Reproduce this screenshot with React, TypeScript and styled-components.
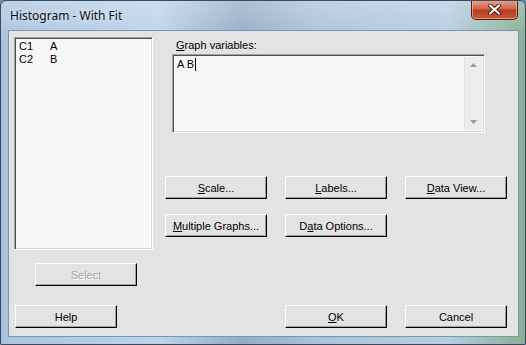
import styled, { createGlobalStyle } from "styled-components";

const Global = createGlobalStyle`
  html, body { margin: 0; padding: 0; background: #6f8fae; }
  body { width: 526px; height: 345px; overflow: hidden; }
`;

const Window = styled.div`
  width: 526px;
  height: 345px;
  display: flex;
  flex-direction: column;
  box-sizing: border-box;
  border-radius: 6px 6px 2px 2px;
  border: 1px solid #3b4a5c;
  background:
    linear-gradient(180deg, rgba(255, 255, 255, 0.25) 0%, rgba(255, 255, 255, 0) 40px),
    linear-gradient(90deg, #a9c4df 0%, #bcd3ea 30%, #93adc6 46%, #abc3da 60%, #b6cde3 85%, #86b092 100%);
  overflow: hidden;
  font-family: "Liberation Sans", Arial, sans-serif;
`;

const TitleBar = styled.div`
  height: 29px;
  display: flex;
  align-items: flex-start;
  justify-content: space-between;
  padding-left: 9px;
  padding-right: 7px;
`;

const Title = styled.div`
  font-family: "Noto Sans", "Open Sans", sans-serif;
  font-size: 12px;
  color: #0b0f14;
  margin-top: 6px;
  text-shadow: 0 0 6px rgba(255, 255, 255, 0.9);
`;

const CloseButton = styled.div`
  width: 45px;
  height: 19px;
  margin-top: -1px;
  border: 1px solid #5a1a10;
  border-top: none;
  border-radius: 0 0 5px 5px;
  background: linear-gradient(180deg, #e8a592 0%, #d0654c 45%, #b83a20 55%, #c8583a 100%);
  box-shadow: inset 0 0 0 1px rgba(255, 220, 200, 0.5);
  display: flex;
  align-items: center;
  justify-content: center;
`;

const Frame = styled.div`
  flex: 1;
  display: flex;
  padding: 0 6px 7px 7px;
`;

const Client = styled.div`
  flex: 1;
  display: flex;
  flex-direction: column;
  background: #e3e3e3;
  border: 1px solid #8195aa;
  padding: 6px 0 0 5px;
  box-sizing: border-box;
`;

const Top = styled.div`
  display: flex;
  gap: 12px;
`;

const LeftColumn = styled.div`
  width: 139px;
  display: flex;
  flex-direction: column;
`;

const Sunken = styled.div`
  box-sizing: border-box;
  border: 1px solid;
  border-color: #a0a0a0 #ffffff #ffffff #a0a0a0;
  box-shadow: inset 1px 1px 0 #505050, inset -1px -1px 0 #d8d8d8;
  background: #f7f7f7;
`;

const ListBox = styled(Sunken)`
  height: 213px;
  padding: 2px 4px;
  font-size: 11px;
  color: #000;
`;

const ListRow = styled.div`
  display: flex;
  height: 13px;
  line-height: 13px;
`;

const Col = styled.span`
  width: 31px;
`;

const Button = styled.div<{ $disabled?: boolean }>`
  width: 102px;
  height: 23px;
  box-sizing: border-box;
  display: flex;
  align-items: center;
  justify-content: center;
  border: 1px solid;
  border-color: #ffffff #000000 #000000 #ffffff;
  box-shadow: inset -1px -1px 0 #a0a0a0;
  background: #e3e3e3;
  font-size: 11px;
  color: ${(p) => (p.$disabled ? "#a3a3a3" : "#000")};
  text-shadow: ${(p) => (p.$disabled ? "1px 1px 0 #fff" : "none")};
`;

const SelectButton = styled(Button)`
  margin-top: 13px;
  margin-left: 21px;
`;

const RightColumn = styled.div`
  display: flex;
  flex-direction: column;
`;

const Label = styled.div`
  font-size: 11px;
  color: #000;
  margin: 2px 0 0 11px;
  height: 14px;
`;

const TextArea = styled(Sunken)`
  margin: 1px 0 0 7px;
  width: 313px;
  height: 79px;
  display: flex;
  background: #f7f7f7;
`;

const TextContent = styled.div`
  flex: 1;
  padding: 3px 4px;
  font-size: 11px;
  display: flex;
  align-items: flex-start;
`;

const Caret = styled.span`
  display: inline-block;
  width: 0;
  height: 13px;
  border-left: 1px solid #000;
  margin-left: 1px;
`;

const ScrollBar = styled.div`
  width: 17px;
  margin: 2px 2px 2px 0;
  background: #ececec;
  border-left: 1px solid #e0e0e0;
  display: flex;
  flex-direction: column;
  justify-content: space-between;
  align-items: center;
  padding: 6px 0;
`;

const ButtonGrid = styled.div`
  display: grid;
  grid-template-columns: repeat(3, 102px);
  column-gap: 18px;
  row-gap: 15px;
  margin-top: 43px;
`;

const Bottom = styled.div`
  display: flex;
  align-items: center;
  margin-top: 19px;
  padding-left: 1px;
  gap: 18px;
`;

const Spacer = styled.div`
  width: 132px;
`;

const U = styled.span`
  text-decoration: underline;
`;

const Arrow = ({ up }: { up?: boolean }) => (
  <svg width="7" height="4" viewBox="0 0 7 4">
    <path d={up ? "M0 4 L3.5 0 L7 4 Z" : "M0 0 L3.5 4 L7 0 Z"} fill="#9a9a9a" />
  </svg>
);

const CloseIcon = () => (
  <svg width="13" height="11" viewBox="0 0 13 11">
    <path d="M2 1.5 L11 9.5 M11 1.5 L2 9.5" stroke="#4a1208" strokeWidth="4" strokeLinecap="round" />
    <path d="M2 1.5 L11 9.5 M11 1.5 L2 9.5" stroke="#ffffff" strokeWidth="2.2" strokeLinecap="round" />
  </svg>
);

export default function App() {
  return (
    <>
      <Global />
      <Window>
        <TitleBar>
          <Title>Histogram - With Fit</Title>
          <CloseButton>
            <CloseIcon />
          </CloseButton>
        </TitleBar>
        <Frame>
          <Client>
            <Top>
              <LeftColumn>
                <ListBox>
                  <ListRow>
                    <Col>C1</Col>
                    <span>A</span>
                  </ListRow>
                  <ListRow>
                    <Col>C2</Col>
                    <span>B</span>
                  </ListRow>
                </ListBox>
                <SelectButton $disabled>Select</SelectButton>
              </LeftColumn>
              <RightColumn>
                <Label>
                  <U>G</U>raph variables:
                </Label>
                <TextArea>
                  <TextContent>
                    A B<Caret />
                  </TextContent>
                  <ScrollBar>
                    <Arrow up />
                    <Arrow />
                  </ScrollBar>
                </TextArea>
                <ButtonGrid>
                  <Button>
                    <U>S</U>cale...
                  </Button>
                  <Button>
                    <U>L</U>abels...
                  </Button>
                  <Button>
                    <U>D</U>ata View...
                  </Button>
                  <Button>
                    <U>M</U>ultiple Graphs...
                  </Button>
                  <Button>
                    D<U>a</U>ta Options...
                  </Button>
                </ButtonGrid>
              </RightColumn>
            </Top>
            <Bottom>
              <Button>Help</Button>
              <Spacer />
              <Button>
                <U>O</U>K
              </Button>
              <Button>Cancel</Button>
            </Bottom>
          </Client>
        </Frame>
      </Window>
    </>
  );
}
